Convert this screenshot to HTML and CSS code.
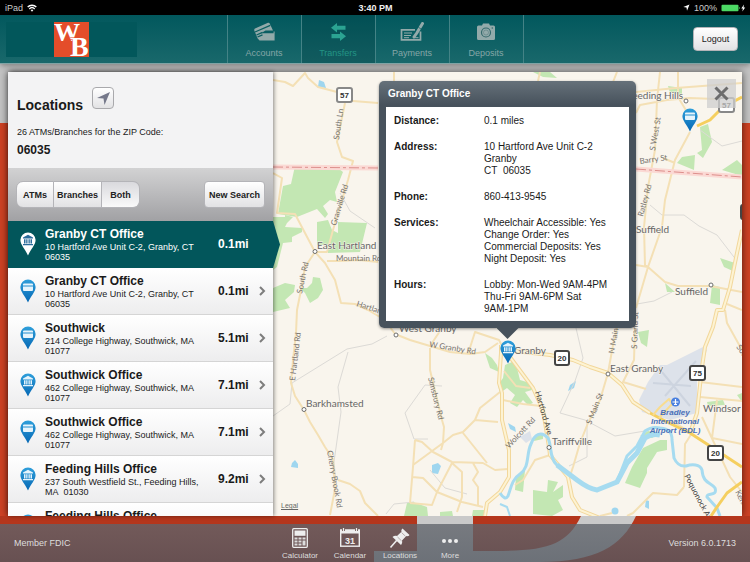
FILE: index.html
```html
<!DOCTYPE html>
<html lang="en">
<head>
<meta charset="utf-8">
<title>Locations</title>
<link rel="stylesheet" href="styles.css">
</head>
<body>
<svg class="symbols" aria-hidden="true">
  <defs>
    <linearGradient id="pinBlue" x1="0" y1="0" x2="0" y2="1"><stop offset="0" stop-color="#2f9fdb"/><stop offset="1" stop-color="#0668b4"/></linearGradient>
    <symbol id="bank" viewBox="0 0 16 24">
      <path d="M8 .5a7.6 7.6 0 0 1 7.6 7.6c0 4.6-4.4 8.600-7.600 15.400C4.800 16.700.4 12.700.4 8.100A7.600 7.600 0 0 1 8 .5z"/>
      <path class="mark" d="M8 2.800l5 2.700v1H3v-1zM4 7.200h1.500v4.300H4zM6.200 7.200h1.300v4.300H6.200zM8.500 7.200h1.300v4.300H8.500zM10.500 7.200H12v4.300h-1.500zM3 12h10v1.200H3z"/>
    </symbol>
    <symbol id="atm" viewBox="0 0 16 24">
      <path d="M8 .5a7.6 7.6 0 0 1 7.6 7.6c0 4.6-4.4 8.600-7.600 15.400C4.800 16.700.4 12.700.4 8.100A7.600 7.600 0 0 1 8 .5z"/>
      <path class="mark" d="M4 4.500h8a1 1 0 0 1 1 1v.9H3v-.9a1 1 0 0 1 1-1zM3 7.400h10V11a1 1 0 0 1-1 1H4a1 1 0 0 1-1-1z"/>
    </symbol>
    <symbol id="chevron" viewBox="0 0 8 10"><path d="M2 1l4 4-4 4" fill="none" stroke="#7d7d7d" stroke-width="2"/></symbol>
  </defs>
</svg>

<div class="status">
  <span class="carrier">iPad
    <svg width="10" height="8" viewBox="0 0 10 8" fill="none" stroke="#fff" stroke-width="1.400"><path d="M.7 3a6 6 0 0 1 8.600 0M2.300 4.900a3.900 3.900 0 0 1 5.400 0"/><path d="M5 7.700L3.600 6.100a2 2 0 0 1 2.800 0z" fill="#fff" stroke="none"/></svg>
  </span>
  <strong>3:40 PM</strong>
  <span class="power">
    <svg width="7" height="7" viewBox="0 0 7 7"><path d="M6.500.5L4 6.800 3.500 3.600.3 3z" fill="#fff"/></svg>
    100%
    <svg width="25" height="8" viewBox="0 0 25 8"><rect x=".5" y=".8" width="17" height="6.400" rx="1" fill="#4cd964"/><path d="M18.300 2.800v2.400c1 0 1-2.400 0-2.400z" fill="#4cd964"/><path d="M23 .5l-2.700 3.900h1.600L21.300 7.500l2.900-4h-1.700z" fill="#fff"/></svg>
  </span>
</div>

<header class="header">
  <div class="brand">
    <svg class="logo" width="131" height="35" viewBox="0 0 131 35" role="img" aria-label="WB">
      <rect width="131" height="35" fill="#02575b"/>
      <rect x="48" width="35" height="35" fill="#e44d2a"/>
      <text class="logo-w" x="48" y="19">W</text>
      <text class="logo-b" x="64" y="34">B</text>
    </svg>
  </div>
  <nav class="tabs">
    <a href="#accounts" class="tab">
      <svg width="25" height="20" viewBox="0 0 25 20"><path d="M3 6.500L16 .8c.8-.3 1.400 0 1.700.7L21 8.600h-7.500l-4.400 2.700h12.500V9.500h1v9H7.500l-2-2.200L2.300 8.500c-.2-.8 0-1.600.7-2z" fill="#93aaaa"/><path d="M3 10l15.300-6.700M4.500 13l6-2.600M5.500 15l5-2.200" stroke="#0b5f62" stroke-width="1.300"/></svg>
      Accounts</a>
    <a href="#transfers" class="tab active">
      <svg width="17" height="20" viewBox="0 0 17 20"><path d="M7 1v2.700h8.500v4H7v2.700L1 5.700zM10 9.500V12H1.500v4.200H10V19l6-4.800z" fill="#2ba392"/></svg>
      Transfers</a>
    <a href="#payments" class="tab">
      <svg width="25" height="20" viewBox="0 0 25 20" fill="none" stroke="#93aaaa"><path d="M15 7.800H1.500v10h19V9.500" stroke-width="1.700"/><path d="M4 11h8M4 13.500h7M4 15.700h5M13.500 15.700h5"/><path d="M22.500 1.500l-5.700 9.500-2.800 4" stroke-width="3" stroke-linecap="round"/><path d="M18.300 5.200l3 2" stroke="#0b5f62" stroke-width=".7"/></svg>
      Payments</a>
    <a href="#deposits" class="tab">
      <svg width="20" height="20" viewBox="0 0 20 20"><path d="M2.500 3.500H6L7 1.500h6l1 2h3.500A1.500 1.500 0 0 1 19 5v11.500a1.500 1.500 0 0 1-1.500 1.500h-15A1.500 1.500 0 0 1 1 16.500V5a1.500 1.500 0 0 1 1.500-1.500z" fill="#93aaaa"/><circle cx="10" cy="10.500" r="4.500" fill="none" stroke="#35696c" stroke-width="1.200"/><circle cx="10" cy="10.500" r="2.500" fill="none" stroke="#5b8082" stroke-width=".6"/><circle cx="16.300" cy="6" r=".8" fill="#35696c"/></svg>
      Deposits</a>
  </nav>
  <div class="session"><button class="button logout">Logout</button></div>
</header>

<main class="stage">
  <div class="panel">
    <aside class="side">
      <section class="summary">
        <div class="heading"><h1>Locations</h1>
          <button class="button locate" aria-label="Use my location"><svg width="15" height="15" viewBox="0 0 15 15"><path d="M14 1L8.500 14 7.500 7.500 1 7z" fill="#75788a"/></svg></button></div>
        <p>26 ATMs/Branches for the ZIP Code:</p>
        <strong>06035</strong>
      </section>
      <section class="filters">
        <div class="segments"><button class="button">ATMs</button><button class="button">Branches</button><button class="button on">Both</button></div>
        <button class="button">New Search</button>
      </section>
      <ul class="list">
        <li class="row selected"><svg class="pin"><use href="#bank"/></svg><div class="place"><h2>Granby CT Office</h2><p>10 Hartford Ave Unit C-2, Granby, CT 06035</p></div><b>0.1mi</b><span class="chev"></span></li>
        <li class="row"><svg class="pin"><use href="#atm"/></svg><div class="place"><h2>Granby CT Office</h2><p>10 Hartford Ave Unit C-2, Granby, CT 06035</p></div><b>0.1mi</b><svg class="chev"><use href="#chevron"/></svg></li>
        <li class="row"><svg class="pin"><use href="#atm"/></svg><div class="place"><h2>Southwick</h2><p>214 College Highway, Southwick, MA 01077</p></div><b>5.1mi</b><svg class="chev"><use href="#chevron"/></svg></li>
        <li class="row"><svg class="pin"><use href="#bank"/></svg><div class="place"><h2>Southwick Office</h2><p>462 College Highway, Southwick, MA 01077</p></div><b>7.1mi</b><svg class="chev"><use href="#chevron"/></svg></li>
        <li class="row"><svg class="pin"><use href="#atm"/></svg><div class="place"><h2>Southwick Office</h2><p>462 College Highway, Southwick, MA 01077</p></div><b>7.1mi</b><svg class="chev"><use href="#chevron"/></svg></li>
        <li class="row"><svg class="pin"><use href="#bank"/></svg><div class="place"><h2>Feeding Hills Office</h2><p>237 South Westfield St., Feeding Hills, MA&nbsp; 01030</p></div><b>9.2mi</b><svg class="chev"><use href="#chevron"/></svg></li>
        <li class="row"><svg class="pin"><use href="#atm"/></svg><div class="place"><h2>Feeding Hills Office</h2></div></li>
      </ul>
    </aside>

    <section class="map" aria-label="Map">
      <svg class="terrain" viewBox="273 72 469 444" preserveAspectRatio="xMinYMin slice">
        <g class="airport"><path d="M660 365l7 0 36-18 4 3-10 30v33l-27 7-18-5-10-3-3-12 9-18z"/><path class="runway" d="M662 372l28 34M696 361l-31 35M653 383l38 3"/><path d="M520 437l10-6 2 8-6 4z"/></g>
        <g class="park">
          <path d="M295 166h40l8 6-8 20 2 10-7-2-7 6 5 8-3 4-8-9-20 8-19-3 5-28 8-2z"/>
          <path d="M317 222l11-2 4 10 6 3v-11l29 1-7 29-32 1-1-8h-10z"/>
          <path d="M273 217h12v-2l8 2-6 6-2 4 17 1v4l-10 5v5l-9 1-6 24-4 3z"/>
          <path d="M273 288l12-5 10 2-1 7-9 8 5 8-17 4z"/>
          <path d="M300 288h7l5-5 1-6 7 1 3 12-5 8-8 5-5-10z"/>
          <path d="M407 503l6-1 14 5 1 9h-24zM440 512l12-1 1 5h-13zM473 510h12l-2 6h-11z"/>
          <path d="M485 353l7 5 5 7 2 7-9-4z"/>
          <path d="M505 365l7-3 5 6 3 12 10 3 2 7-7 2 8 11-5 2-5-5-6 7-7-4 5-8-8-7-7 5-2-8 5-7z"/>
          <path d="M643 448l17-8h7v10l-10 2-10 16v5l-7 15-15-5 7-16z"/>
          <path d="M533 490l14 2 1-12 10 2-5 10 10-7v12l-5 3 5 10-11 6-19-2zM516 477l9-7-2 22-8-2zM535 436l8-2v5l-9 2z"/>
          <path d="M638 332l11-2-2 17-6-4zM707 402l16-2 2 5-17 1zM737 395l5-2v9zM640 436l8-5 12 2-8 5z"/>
          <path d="M700 127l8-3 4 18-9 16-6-5 5-3zM682 157l13-2-1 15-17-7zM722 170l15-10 5 5v11zM720 258l15 5v9l-11-5zM665 283l10 9h-8zM712 285l8 2v18l-10-2z"/>
          <path d="M668 86l14 2v6l-12-1zM533 72h17l7 6-14-1z"/>
        </g>
        <g class="water-area">
          <path d="M319 80l5 2 2 6-8-1zM295 460l3 4v4l-7-1 1-4zM432 465l6-2 3 3-3 8-6-1zM570 385l6-4-2 7-6 3zM508 423l7 4 1 5-6-3zM646 500l3 1v8l-4-2z"/><circle cx="615" cy="511" r="3.500"/>
        </g>
        <path class="trail" d="M292 383l55-34 25-5 15-8M348 352l-10 35 3 25-7 50 2 20M273 416l17-12 2-21M442 386l-17-1-20 28 9 26h14M340 193l10 18 25 17M576 328l7 30-8 23-15 32 25 7 30 16 30-5M587 422v35l-18 9M650 205l12 10 22 0 15 11 18 9 20 26M637 304l17-3 18-9M430 470l15 18 22 6M386 514l8-10 20-2M700 130l22 16 20-5"/>
        <g class="road">
          <path d="M273 80l12 2 8 4 12-13 3 5 10 9 19 5 16 9 25 2M345 103l-8 39 5 15 11 4-5 19-15 50-6 22h-12M273 173l9 5-5 35 18 1 20 38-10 15-3 18-5 25-1 23-3 27-2 23 4 13 9 14 6 12 8 13 7 12 8 12 2 30-5 26M338 480l12 4 10 7 5 12 13 13M315 252l10 11 10 17 6 23 14 1 13 6 17 10 10 14 15 6 20 6 20 6 20 2 15-2 13-9M327 261h12l20-1 19 2"/>
          <path d="M430 348l0 22 6 25 6 25 2 7-1 16-2 7M430 346l12-18M468 354l7-22 24 8 6 12M415 440l-2 27-3 36M415 440l7 2 11 10 19 10 31 1 12 7 13-1M413 465l30-22 10-8 10-3 12-12 5-12 20-16M463 433l24 30M475 420l23 2M412 477l11 1 14 14 25 10 21 5M452 463l-15 29-5 13-22-2M452 463l10 9v25l-5 15M473 463l5 9-5 8 5 7v18"/>
          <path d="M608 373l-8 27-12 23-8 20-7 24-5 15M608 373l5-28 4-17M635 328l-1 32-11 22 23 7M550 455l-15 5-12 20-8 5M503 400l20 4 18 2M530 388l-14-2-12-15"/>
          <path d="M725 310l2 13 15 27M700 382l42 5M700 397l42 4M702 417l28 60 12 15M717 400l-5 38 30 6M684 487l-7 8-24-2-20 20-6 3M670 420l22 13-7 11-1 43M600 516l12-3"/>
          <path d="M690 132l-15 28-10 40-3 27-14 40-12 41M660 72l-3 28-2 50-7 37-4 40 1 38 3 2 17 15 13 4 32 0 32 6M663 158l12 5M727 304l15 6M636 265l12 2M636 113l4-8 27-5 23-2 25 1M636 92l40-4 66-5M678 72v25l12 20M540 72l-2 9M617 72l-4 10M394 72v10"/>
        </g>
        <g class="highway"><path d="M501 345v8l-2 30 3 10v27l7 30v27l-9 15-13 11-2 13"/><path d="M507 350l43 5 23 5 17 7 18 6 14 12 11 17 17 11"/><path d="M510 357l23 31 10 22 6 37 1 8 18 22 4 20 8 13 20 8"/><path d="M742 230l-5 23-7 34-7 23-6 0-4 17-8 20-3 20-5 46-7 20"/></g>
        <g class="highway-core"><path d="M501 345v8l-2 30 3 10v27l7 30v27l-9 15-13 11-2 13"/><path d="M507 350l43 5 23 5 17 7 18 6 14 12 11 17 17 11"/><path d="M510 357l23 31 10 22 6 37 1 8 18 22 4 20 8 13 20 8"/><path d="M742 230l-5 23-7 34-7 23-6 0-4 17-8 20-3 20-5 46-7 20"/></g>
        <path class="river" d="M500 493q5 8 8 3c3-8 4-17 12-22 10-7 6-20 11-30 3-9 10-14 17-6 4 8 1 20 9 27l20 15q12 9 20 10l20-8 10-26 10-10 8-15q7-5 15-3c9 1 12 4 12 12l2 18q4 9 12 8c6-2 14-2 16 4 1 14 9 12 13 18 3 9-9 4-8 9l10 11 3 8"/>
        <path class="river main" d="M557 465l20 15q12 9 20 10l20-8 10-19 10-10 8-15q7-5 15-3"/><path class="river thin" d="M500 504l7 3 3 9"/>
        <g class="motorway"><path d="M650 413l17 9 23 11 23 15 29 19M742 482l-15 11-10 14-6 9M742 97l-19 10-13 13-13 6"/></g>
        <path class="motorway branch" d="M653 415l7-8 9-8 3 5-13 14"/>
        <g class="border"><path class="halo" d="M273 167l105 1M636 169l106 8"/><path class="dash" d="M273 167l105 1M636 169l106 8"/></g>

        <g class="town-dot"><circle cx="315" cy="251.500" r="2"/><circle cx="304" cy="409.500" r="2"/><circle cx="396" cy="335" r="2"/><circle cx="608" cy="374" r="2"/><circle cx="549" cy="447.500" r="2"/><circle cx="711" cy="285" r="2"/><circle cx="686" cy="101" r="2"/></g>
        <g class="town">
          <text x="317" y="249">East Hartland</text><text x="306" y="407">Barkhamsted</text><text x="399" y="332">West Granby</text><text x="514" y="354">Granby</text><text x="610" y="372">East Granby</text><text x="552" y="445">Tariffville</text><text x="703" y="412">Windsor</text><text x="636" y="233">Suffield</text><text x="675" y="295">Suffield</text><text x="627" y="99">Feeding Hills</text>
        </g>
        <g class="street">
          <text transform="translate(339 140) rotate(-82)">South Ln</text><text transform="translate(336 226) rotate(-73)">Granville Rd</text><text x="336" y="261">Mountain Rd</text><text transform="translate(302 294) rotate(-78)">South Rd</text><text transform="translate(356 306) rotate(18)">Hartland Blvd</text><text transform="translate(295 381) rotate(-83)">E Hartland Rd</text>
          <text transform="translate(429 347) rotate(9)">W Granby Rd</text><text transform="translate(428 378) rotate(76)">Simsbury Rd</text><text transform="translate(327 451) rotate(80)">Cherry Brook Rd</text>
          <text class="strong" transform="translate(535 392) rotate(74)">Hartford Ave</text><text transform="translate(509 449) rotate(-47)">Wolcott Rd</text><text transform="translate(591 425) rotate(-68)">S Main St</text><text transform="translate(614 354) rotate(-80)">N Main St</text><text transform="translate(637 349) rotate(-88)">S Grand St</text>
          <text class="strong" transform="translate(684 476) rotate(62)">Poquonock Ave</text><text transform="translate(735 492) rotate(62)">Kennedy Rd</text><text transform="translate(736 347) rotate(55)">South St</text><text transform="translate(655 151) rotate(-80)">S West St</text><text transform="translate(640 164) rotate(-8)">Barry St</text><text transform="translate(643 217) rotate(-75)">Ratley Rd</text>
        </g>
        <g class="airport-name"><circle cx="675.500" cy="402" r="4.500"/><path d="M675.500 399v6M672.500 402h6M674 404.500h3" stroke="#fff" stroke-width="1.200"/><text x="675" y="415">Bradley</text><text x="675" y="424">International</text><text x="675" y="433">Airport (BDL)</text></g>
        <g class="shield light"><rect x="337" y="88" width="15" height="14" rx="2"/><text x="344.500" y="98">57</text><rect x="719" y="98" width="15" height="14" rx="2"/><text x="726.500" y="108">57</text></g>
        <g class="shield"><rect x="555" y="351" width="14" height="14" rx="2"/><text x="562" y="361">20</text><rect x="690" y="366" width="15" height="14" rx="2"/><text x="697.500" y="376">75</text><rect x="708" y="446" width="15" height="14" rx="2"/><text x="715.500" y="456">20</text><rect x="741" y="205" width="14" height="14" rx="2"/></g>
        <use href="#atm" class="map-pin" x="682" y="108" width="16" height="24"/>
        <use href="#bank" class="map-pin" x="500" y="340" width="16" height="24"/>
      </svg>
      <a class="legal" href="#legal">Legal</a>
      <button class="close" aria-label="Close"><svg width="15" height="15" viewBox="0 0 15 15"><path d="M1.500 1.500l12 12M13.500 1.500l-12 12" stroke="#6d6d6d" stroke-width="3"/></svg></button>
      <article class="popup">
        <h2>Granby CT Office</h2>
        <dl>
          <dt>Distance:</dt><dd>0.1 miles</dd>
          <dt>Address:</dt><dd>10 Hartford Ave Unit C-2<br>Granby<br>CT&nbsp; 06035</dd>
          <dt>Phone:</dt><dd>860-413-9545</dd>
          <dt>Services:</dt><dd>Wheelchair Accessible: Yes<br>Change Order: Yes<br>Commercial Deposits: Yes<br>Night Deposit: Yes</dd>
          <dt>Hours:</dt><dd>Lobby: Mon-Wed 9AM-4PM<br>Thu-Fri 9AM-6PM Sat<br>9AM-1PM</dd>
        </dl>
      </article>
    </section>
  </div>
</main>

<footer class="footer">
  <svg class="backdrop" viewBox="0 516 750 46" preserveAspectRatio="xMidYMax slice" aria-hidden="true"><path d="M417 516h56v35h22c52 0 72-6 86-35h55c-14 30-40 46-96 46H374v-11h43z" fill="#c9c9c9"/></svg>
  <div class="bar">
    <span class="note">Member FDIC</span>
    <nav class="tools">
      <a href="#calculator"><svg width="20" height="22" viewBox="0 0 20 22"><rect x="2.700" y="1.700" width="14.600" height="18.600" rx="1" fill="none" stroke="#eee" stroke-width="1.300"/><path d="M4.500 3.500h11v5.300h-11z" fill="#eee"/><path d="M4.500 10.500h3v2h-3zM8.500 10.500h3v2h-3zM12.500 10.500h3v2h-3zM4.500 13.500h3v2h-3zM8.500 13.500h3v2h-3zM12.500 13.500h3v5h-3zM4.500 16.500h3v2h-3zM8.500 16.500h3v2h-3z" fill="#ddd"/></svg>Calculator</a>
      <a href="#calendar"><svg width="22" height="22" viewBox="0 0 22 22"><rect x="1.700" y="3.200" width="18.600" height="16" fill="none" stroke="#eee" stroke-width="1.400"/><path d="M1 2.500h20v4H1z" fill="#eee"/><path d="M4.500 1v3M17.500 1v3" stroke="#6d5552" stroke-width="3"/><path d="M4.500 1v3M17.500 1v3" stroke="#eee" stroke-width="1.300"/><text x="11" y="16.500">31</text></svg>Calendar</a>
      <a href="#locations"><svg width="22" height="22" viewBox="0 0 22 22"><path d="M13.500 1.500l7 6.500c-.8 1.200-2 1.400-3.200 1l-4.300 4.500c.5 1.800 0 3.300-1 4.500L3.500 10c1.300-1.200 2.800-1.500 4.500-1l4.500-4.300c-.4-1.200 0-2.300 1-3.200z" fill="#eee"/><path d="M8 13l-6.500 7.500" stroke="#eee" stroke-width="1.600"/><path d="M8.500 10l4 3.800M12.500 5.500l4 3.800" stroke="#a79b9a" stroke-width=".8"/></svg>Locations</a>
      <a href="#more"><svg width="20" height="22" viewBox="0 0 20 22" fill="#eee"><circle cx="4" cy="14" r="2"/><circle cx="10" cy="14" r="2"/><circle cx="16" cy="14" r="2"/></svg>More</a>
    </nav>
    <span class="note version">Version 6.0.1713</span>
  </div>
</footer>
</body>
</html>
```
FILE: styles.css
```css
* { box-sizing: border-box; }

body {
  margin: 0;
  height: 100vh;
  display: flex;
  flex-direction: column;
  overflow: hidden;
  font-family: "Liberation Sans", Arial, sans-serif;
  font-size: 9px;
  color: #1a1a1a;
  background: #cf4224;
}

h1, h2, p, ul, dl, dd { margin: 0; padding: 0; }
a { color: inherit; text-decoration: none; }
.symbols { position: absolute; width: 0; height: 0; }

/* Status bar */
.status {
  flex: none;
  height: 15px;
  padding: 0 4px 0 5px;
  display: grid;
  grid-template-columns: 1fr auto 1fr;
  align-items: center;
  background: #000;
  color: #f2f2f2;
}
.carrier, .power { display: flex; align-items: center; gap: 4px; color: #ccc; }
.power { justify-content: flex-end; }

/* Header */
.header {
  position: relative;
  z-index: 2;
  flex: none;
  height: 49px;
  display: flex;
  background: linear-gradient(#02585d, #19686b);
  border-bottom: 1px solid #7fa3a4;
  box-shadow: 0 1px 6px rgba(0, 0, 0, .4);
}
.brand, .session { flex: 1 1 0; display: flex; align-items: center; }
.brand { padding: 0 6px; }
.logo { overflow: visible; }
.session { justify-content: flex-end; padding-right: 12px; }
.logo-w, .logo-b { font-family: "Liberation Serif", serif; font-weight: bold; fill: #fff; }
.logo-w { font-size: 26px; }
.logo-b { font-size: 28px; stroke: #e44d2a; stroke-width: 1px; paint-order: stroke; }
.tabs { display: flex; border-left: 1px solid #448386; }
.tab {
  width: 74px;
  padding-top: 7px;
  display: flex;
  flex-direction: column;
  align-items: center;
  gap: 6px;
  border-right: 1px solid #448386;
  color: #86a6a7;
}
.tab.active { color: #239585; background: rgba(0, 55, 60, .25); }

.button {
  border: 1px solid #b4b4b8;
  border-radius: 4px;
  padding: 0 4px;
  background: linear-gradient(#fff, #e2e2e4);
  font: bold 9px "Liberation Sans", Arial, sans-serif;
  color: #222;
}
.logout { width: 45px; height: 24px; padding: 0; font-weight: normal; }

/* Content panel */
.stage {
  flex: 1;
  min-height: 0;
  padding: 8px 8px 0;
  display: flex;
  background: linear-gradient(#c4c4c4 0 59px, #cf4224 59px);
}
.panel {
  flex: 1;
  min-width: 0;
  display: flex;
  background: #f9f5ed;
  box-shadow: 0 0 8px rgba(0, 0, 0, .65);
}
.side {
  position: relative;
  z-index: 1;
  flex: none;
  width: 265px;
  display: flex;
  flex-direction: column;
  box-shadow: 1px 0 4px rgba(0, 0, 0, .45);
}
.summary { flex: none; height: 96px; padding: 15px 9px 0; background: #f3f3f4; }
.summary p { margin-top: 16px; line-height: 14px; }
.summary strong { display: block; margin-top: 3px; font-size: 12px; line-height: 16px; }
.heading { display: flex; gap: 9px; align-items: flex-start; height: 22px; }
.heading h1 { padding-top: 10px; font-size: 14px; line-height: 16px; }
.locate { width: 22px; height: 22px; padding: 2px; line-height: 0; border-color: #a9a9ac; }
.filters {
  flex: none;
  height: 53px;
  padding: 0 8px;
  display: flex;
  align-items: center;
  justify-content: space-between;
  background: linear-gradient(#d2d2d3, #a1a1a4);
}
.filters .button { height: 27px; }
.segments { display: flex; }
.segments .button { min-width: 38px; border-radius: 0; padding: 0 3px; }
.segments .button + .button { border-left-width: 0; }
.segments .button:first-child { border-radius: 7px 0 0 7px; }
.segments .button:last-child { border-radius: 0 7px 7px 0; }
.segments .on { background: linear-gradient(#d9d9dd, #fafafa); }

.list { flex: 1; min-height: 0; overflow-x: visible; overflow-y: clip; list-style: none; background: #fff; }
.row {
  position: relative;
  height: 47px;
  padding: 0 7px 0 12px;
  display: flex;
  align-items: center;
  border-bottom: 1px solid #d5d5d5;
  background: linear-gradient(#fff, #ededee);
}
.row b { width: 40px; font-size: 12px; }
.pin { flex: none; width: 16px; height: 24px; fill: url(#pinBlue); --mark: #e6f4fc; }
.mark { fill: var(--mark); }
.place { flex: 1; align-self: flex-start; padding: 6px 10px 0 9px; }
.place h2 { font-size: 12px; line-height: 15px; white-space: nowrap; }
.place p { line-height: 10px; width: 158px; }
.chev { flex: none; width: 8px; height: 10px; }
.selected { background: #02565b; color: #fff; border-color: #02565b; }
.selected .pin { fill: #fff; --mark: #2b6c9c; }
.selected::after {
  content: "";
  position: absolute;
  left: 100%;
  top: 0;
  width: 7px;
  height: 47px;
  background: #02565b;
  clip-path: polygon(0 0, 100% 50%, 0 100%);
}

/* Map */
.map { position: relative; flex: 1; min-width: 0; }
.terrain { position: absolute; inset: 0; width: 100%; height: 100%; background: #f9f5ed; font-family: Lato, "Open Sans", sans-serif; }
.terrain path { stroke-linejoin: round; }
.airport { fill: #dde2ea; }
.runway { stroke: #cdd4df; stroke-width: 2; }
.park { fill: #c3e7b3; }
.water-area { fill: #9fd6ef; }
.trail { fill: none; stroke: #dcdad6; stroke-width: 1; }
.road { fill: none; stroke: #f4e0b5; stroke-width: 2; }
.highway { fill: none; stroke: #f2d79b; stroke-width: 4; }
.highway-core { fill: none; stroke: #fdf3d3; stroke-width: 2; }
.river { fill: none; stroke: #a6dbf0; stroke-width: 3; }
.river.main { stroke-width: 5; }
.river.thin { stroke-width: 2; }
.motorway { fill: none; stroke: #f5cf5f; stroke-width: 3; }
.motorway.branch { stroke: #f8dc90; stroke-width: 2; }
.border path { fill: none; }
.halo { stroke: #fbd9d4; stroke-width: 5; }
.dash { stroke: #dd8f8c; stroke-width: 1; stroke-dasharray: 10 3 3 3; }
.town-dot { fill: #fff; stroke: #6e6e6e; stroke-width: 1; }
.town { font-size: 10px; fill: #666; stroke: #faf6ee; stroke-width: 1px; paint-order: stroke; }
.street { font-size: 8px; fill: #77736f; }
.street .strong { fill: #444; }
.airport-name { fill: #4a80df; font: italic bold 8px "Liberation Sans", sans-serif; text-anchor: middle; }
.airport-name text { fill: #4a70b8; }
.shield { font: bold 8px "Liberation Sans", sans-serif; text-anchor: middle; fill: #333; }
.shield rect { fill: #fff; stroke: #444; stroke-width: 2; }
.shield.light rect { stroke: #888; }
.map-pin { fill: url(#pinBlue); --mark: #e6f4fc; }
.legal { position: absolute; left: 8px; bottom: 6px; font-size: 7px; line-height: 9px; color: #666; text-decoration: underline; }
.close {
  position: absolute;
  top: 7px;
  right: 6px;
  width: 29px;
  height: 29px;
  padding: 0;
  border: 0;
  display: grid;
  place-items: center;
  background: rgba(205, 205, 205, .75);
}

.popup {
  position: absolute;
  left: 106px;
  top: 9px;
  width: 257px;
  padding: 0 7px 7px;
  border-radius: 5px;
  background: linear-gradient(#66717a, #47525c 24px);
  font-size: 10px;
  line-height: 12px;
  box-shadow: 0 1px 3px rgba(0, 0, 0, .4);
}
.popup::after {
  content: "";
  position: absolute;
  left: 50%;
  top: 100%;
  width: 22px;
  height: 11px;
  margin-left: -11px;
  background: #47525c;
  clip-path: polygon(0 0, 100% 0, 50% 100%);
}
.popup h2 { padding: 0 2px; font-size: 10px; line-height: 26px; color: #fff; }
.popup dl {
  padding: 8px 8px 6px;
  display: grid;
  grid-template-columns: 90px 1fr;
  row-gap: 14px;
  align-content: start;
  background: #fff;
}
.popup dt { font-weight: bold; }

/* Footer */
.footer { position: relative; flex: none; padding-top: 8px; background: #b4361c; }
.backdrop { position: absolute; inset: 0; width: 100%; height: 100%; }
.bar {
  position: relative;
  height: 38px;
  padding: 0 14px;
  display: flex;
  align-items: center;
  background: linear-gradient(rgba(96, 100, 107, .78), rgba(82, 88, 97, .78));
  color: #ddd;
}
.note { flex: 1 1 0; }
.version { text-align: right; }
.tools { display: flex; font-size: 8px; line-height: 9px; }
.tools a { width: 50px; display: flex; flex-direction: column; align-items: center; gap: 2px; }
.tools text { font-size: 9px; font-weight: bold; text-anchor: middle; fill: #eee; }
```
